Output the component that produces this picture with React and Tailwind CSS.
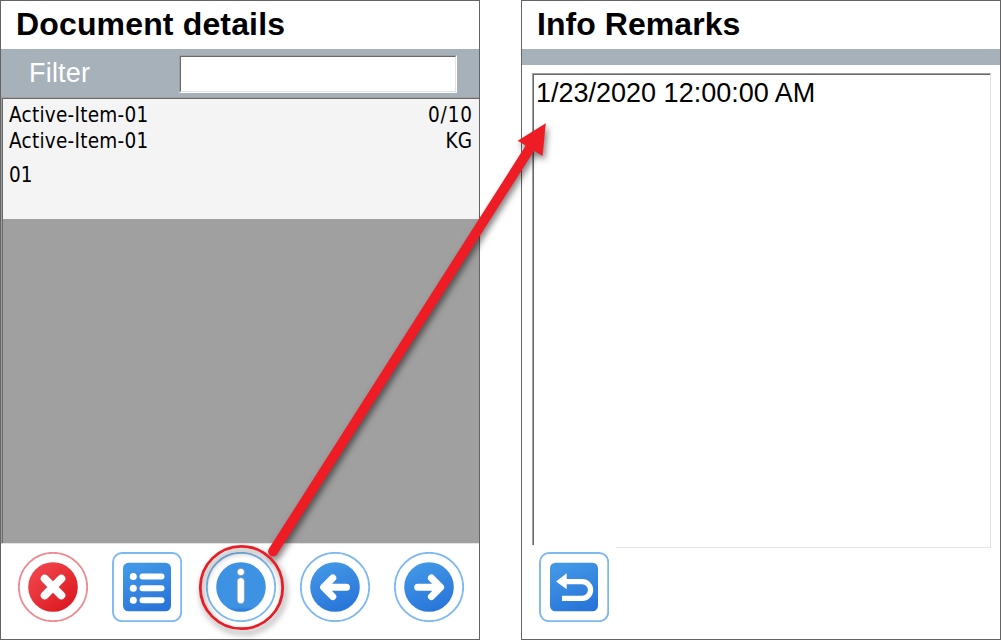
import React from "react";

function Round({ ring = "#7db8f0", fill = "url(#blue)", label, children }) {
  return (
    <button aria-label={label} className="h-[70px] w-[70px] shrink-0">
      <svg viewBox="0 0 70 70" className="block h-full w-full">
        <circle cx="35" cy="35" r="34.2" fill="#fff" stroke={ring} strokeWidth="1.8" />
        <circle cx="35" cy="35" r="24.8" fill={fill} />
        {children}
      </svg>
    </button>
  );
}

function Square({ label, children }) {
  return (
    <button aria-label={label} className="h-[70px] w-[70px] shrink-0">
      <svg viewBox="0 0 70 70" className="block h-full w-full">
        <rect x="1" y="1" width="68.2" height="68.2" rx="9" fill="#fff" stroke="#7db8f0" strokeWidth="1.9" />
        <rect x="11" y="10.7" width="48" height="48.6" rx="5.5" fill="url(#blue)" />
        {children}
      </svg>
    </button>
  );
}

function Title({ children, className }) {
  return (
    <h1 className={`h-12 shrink-0 whitespace-nowrap pl-[15px] text-[32px] leading-[46px] font-bold text-black ${className}`}>
      {children}
    </h1>
  );
}

export default function App() {
  return (
    <main className="relative flex h-[640px] w-[1001px] justify-between overflow-hidden bg-white font-['Liberation_Sans',sans-serif]">
      <svg className="absolute h-0 w-0" aria-hidden="true">
        <defs>
          <linearGradient id="blue" x1="0.3" y1="0" x2="0.7" y2="1">
            <stop offset="0" stopColor="#4298e6" />
            <stop offset="1" stopColor="#2874d9" />
          </linearGradient>
          <linearGradient id="red" x1="0.1" y1="0.1" x2="0.8" y2="0.9">
            <stop offset="0" stopColor="#f0464c" />
            <stop offset="1" stopColor="#dd1b23" />
          </linearGradient>
          <linearGradient id="info" x1="0" y1="0" x2="0" y2="1">
            <stop offset="0.9" stopColor="#3e92e3" />
            <stop offset="1" stopColor="#2874d9" />
          </linearGradient>
        </defs>
      </svg>

      <section className="flex w-[480px] flex-col border border-[#646464]">
        <Title className="tracking-[0.15px]">Document details</Title>
        <div className="flex h-12 shrink-0 items-start justify-between bg-[#a7b1ba] pr-[22px] pl-7">
          <label htmlFor="filter" className="text-[27px] leading-[48px] tracking-[0.2px] text-white">Filter</label>
          <div className="mt-1.5 h-[38px] w-[278px] border border-t-[#a0a0a0] border-r-white border-b-white border-l-[#a0a0a0]">
            <input id="filter" className="block h-full w-full border border-t-[#696969] border-r-[#e3e3e3] border-b-[#e3e3e3] border-l-[#696969] bg-white px-1 text-2xl outline-none" />
          </div>
        </div>
        <div className="h-[447px] shrink-0 border-t border-b border-l border-t-[#a0a0a0] border-b-[#e3e3e3] border-l-[#a0a0a0]">
          <div className="h-full border-t border-l border-[#696969] bg-[#a0a0a0]">
            <div className="h-[120px] bg-[#f4f4f4] pt-[3px] pr-1.5 pl-1.5 font-['DejaVu_Sans_Condensed','DejaVu_Sans',sans-serif] text-[20.5px] leading-[26px] text-black">
              <div className="flex justify-between"><span className="tracking-[0.26px]">Active-Item-01</span><span className="tracking-[0.9px]">0/10</span></div>
              <div className="flex justify-between"><span className="tracking-[0.26px]">Active-Item-01</span><span className="pr-px">KG</span></div>
              <div className="pt-2">01</div>
            </div>
          </div>
        </div>
        <div className="flex gap-6 pt-2 pl-[17px]">
          <Round ring="#ec8b90" fill="url(#red)" label="Cancel">
            <path d="M26.7 26.7 43.3 43.3M43.3 26.7 26.7 43.3" stroke="#fff" strokeWidth="8" strokeLinecap="round" />
          </Round>
          <Square label="List">
            {[24.5, 36.3, 48.2].map((y) => (
              <g key={y} fill="#fff">
                <circle cx="21.3" cy={y} r="3.5" />
                <rect x="27.5" y={y - 3} width="25" height="6" rx="3" />
              </g>
            ))}
          </Square>
          <Round label="Info" fill="url(#info)">
            <g fill="#fff" stroke="#7f8b98" strokeWidth="0.6">
              <circle cx="34.8" cy="20" r="3.6" />
              <rect x="31.2" y="25.7" width="7.2" height="26" rx="3.6" />
            </g>
          </Round>
          <Round label="Previous">
            <path d="M46.5 35.2H24M32.8 26 23.6 35.2 32.8 44.6" fill="none" stroke="#fff" strokeWidth="7" strokeLinecap="round" strokeLinejoin="round" />
          </Round>
          <Round label="Next">
            <path d="M23.7 35.2H46.5M37.4 26 46.6 35.2 37.4 44.6" fill="none" stroke="#fff" strokeWidth="7" strokeLinecap="round" strokeLinejoin="round" />
          </Round>
        </div>
      </section>

      <section className="flex w-[480px] flex-col border border-[#646464]">
        <Title className="tracking-[0.05px]">Info Remarks</Title>
        <div className="h-4 shrink-0 bg-[#a7b1ba]" />
        <div className="mt-2 ml-2.5 h-[475px] w-[459px] shrink-0 border border-t-[#a0a0a0] border-r-[#e3e3e3] border-b-[#e3e3e3] border-l-[#a0a0a0]">
          <div className="h-full border-t border-l border-[#696969] pt-[2px] pl-[2px] text-[27px] leading-[32px] whitespace-nowrap text-black">
            1/23/2020 12:00:00 AM
          </div>
        </div>
        <div className="relative -mt-[3px] ml-2.5 w-[84px] bg-white pt-[7px] pl-[7px]">
          <Square label="Back">
            <path d="M17 29.6 27.7 21.2V27H43.2A10.9 10.9 0 0 1 43.2 49H23V43.7H43.2A5.7 5.7 0 0 0 43.2 32.3H27.7V37.3Z" fill="#fff" />
          </Square>
        </div>
      </section>

      <svg viewBox="0 0 1001 640" className="pointer-events-none absolute inset-0 h-full w-full drop-shadow-[2px_4px_3px_rgba(0,0,0,0.5)]">
        <circle cx="241.5" cy="587.5" r="41.2" fill="none" stroke="#e71d27" strokeWidth="2.8" />
        <path d="M273 551.5 530 148" stroke="#ee1c25" strokeWidth="9.8" strokeLinecap="round" />
        <path d="M545.8 123.3 517.7 140.7 542.5 156Z" fill="#ee1c25" />
      </svg>
    </main>
  );
}
